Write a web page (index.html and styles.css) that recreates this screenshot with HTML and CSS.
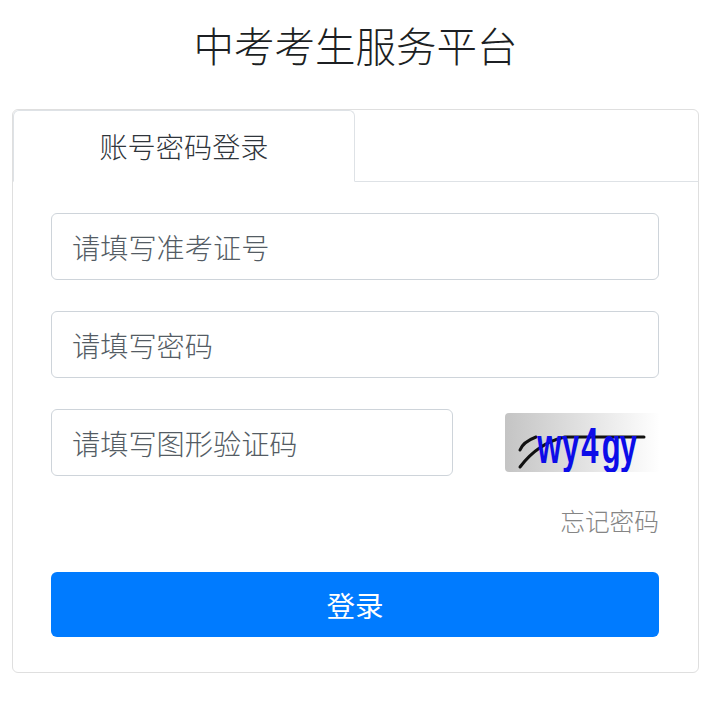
FILE: index.html
```html
<!DOCTYPE html>
<html lang="zh-CN">
<head>
<meta charset="utf-8">
<title>中考考生服务平台</title>
<link rel="stylesheet" href="styles.css">
</head>
<body>
<h1 class="title">中考考生服务平台</h1>
<div class="card">
  <div class="tabs"><div class="tab">账号密码登录</div></div>
  <form class="form">
    <input class="input" type="text" placeholder="请填写准考证号">
    <input class="input" type="password" placeholder="请填写密码">
    <div class="captcha-row">
      <input class="input captcha-input" type="text" placeholder="请填写图形验证码">
      <svg class="captcha" viewBox="0 0 155 59" width="155" height="59" aria-label="验证码">
        <defs>
          <linearGradient id="cg" x1="0" x2="1" y1="0" y2="0">
            <stop offset="0" stop-color="#c4c4c4"/>
            <stop offset="1" stop-color="#ffffff"/>
          </linearGradient>
        </defs>
        <rect width="155" height="59" rx="4" fill="url(#cg)"/>
        <path d="M15 37 Q18 29 31 24" class="captcha-line"/>
        <path d="M15 54 Q33 30 60 24 L139 24" class="captcha-line"/>
        <text class="captcha-text" transform="scale(.62 1)" x="52 92 123 156 185" y="50">wy4gy</text>
      </svg>
    </div>
    <div class="forgot-row"><a class="forgot">忘记密码</a></div>
    <button class="submit" type="button">登录</button>
  </form>
</div>
</body>
</html>
```
FILE: styles.css
```css
* { box-sizing: border-box; }
html, body { margin: 0; padding: 0; background: #fff; }
body {
  width: 716px;
  height: 717px;
  overflow: hidden;
  padding: 0 17px 0 12px;
  font-family: "Noto Sans CJK SC", "Liberation Sans", sans-serif;
  color: #212529;
}
.title {
  margin: 0;
  height: 109px;
  padding-top: 15px;
  text-align: center;
  font-size: 40.5px;
  line-height: 60px;
  font-weight: 300;
  color: #1c1f23;
}
.card {
  height: 564px;
  border: 1px solid #dfdfdf;
  border-radius: 6px;
}
.tabs {
  height: 72px;
  border-bottom: 1px solid #dee2e6;
}
.tab {
  width: 342px;
  height: 72px;
  background: #fff;
  border: 1px solid #dee2e6;
  border-bottom-color: #fff;
  border-radius: 6px 6px 0 0;
  padding-top: 14px;
  text-align: center;
  font-size: 28.2px;
  line-height: 42px;
  font-weight: 300;
  color: #2f353b;
}
.form {
  display: flex;
  flex-direction: column;
  padding: 31px 39px 0 38px;
}
.input {
  display: block;
  width: 100%;
  height: 67px;
  margin-bottom: 31px;
  padding: 0 20px;
  border: 1px solid #ced4da;
  border-radius: 6px;
  background: #fff;
  font-family: inherit;
  font-size: 28.2px;
  font-weight: 300;
  color: #495057;
  outline: none;
}
.input::placeholder { color: #545c64; opacity: 1; }
.captcha-row {
  display: flex;
  justify-content: space-between;
  align-items: flex-start;
}
.captcha-input { width: 402px; margin-bottom: 0; }
.captcha { display: block; margin-top: 4px; margin-right: -1px; }
.captcha-text {
  font-family: "Liberation Sans", sans-serif;
  font-size: 50px;
  font-weight: 700;
  fill: #0c0ce8;
}
.captcha-line {
  fill: none;
  stroke: #111;
  stroke-width: 3;
  stroke-linecap: round;
}
.forgot-row {
  margin-top: 26px;
  height: 38px;
  text-align: right;
}
.forgot {
  font-size: 24.7px;
  line-height: 36px;
  font-weight: 300;
  color: #858585;
}
.submit {
  display: block;
  width: 100%;
  height: 65px;
  margin-top: 32px;
  border: 0;
  border-radius: 6px;
  background: #007bff;
  color: #fff;
  font-family: inherit;
  font-size: 28.5px;
}
```
